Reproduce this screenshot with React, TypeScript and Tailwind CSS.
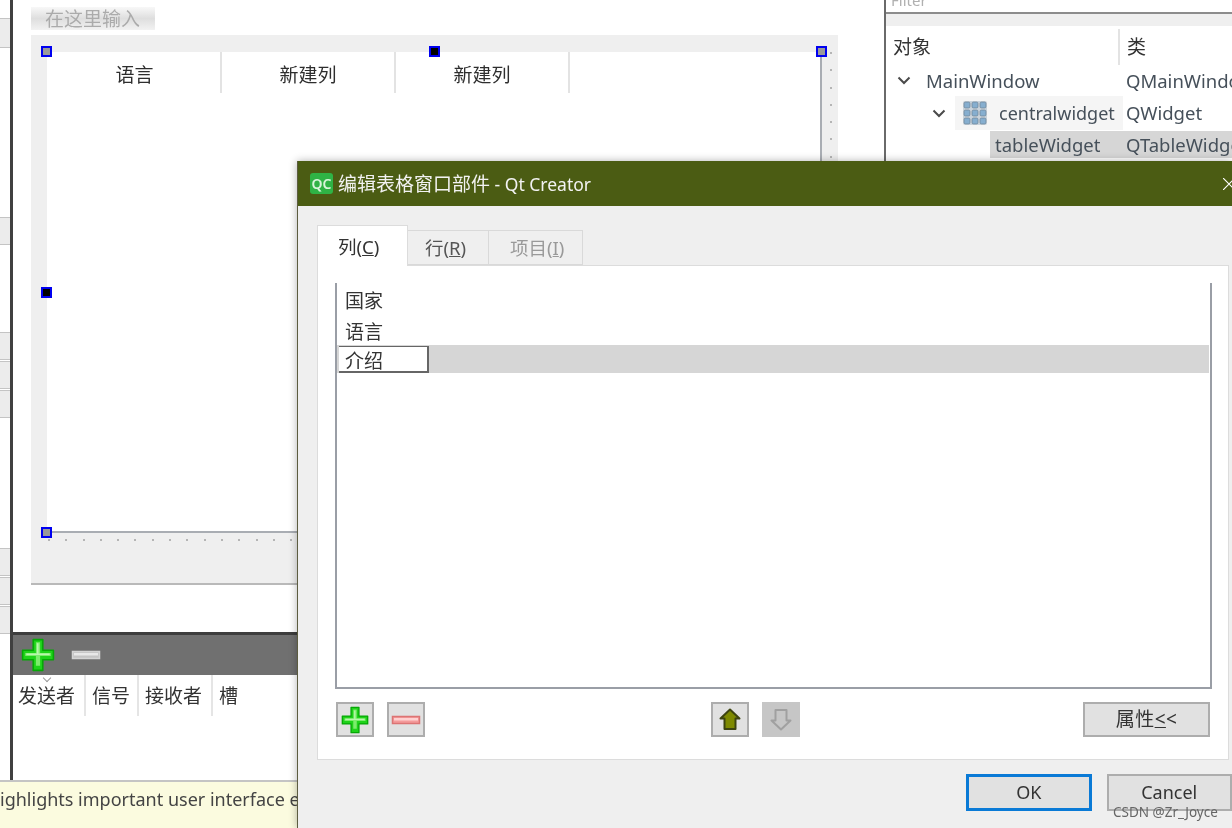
import type { ReactNode } from "react";

const FONT = "font-['Noto_Sans','Noto_Sans_CJK_SC',sans-serif]";

function Handle({ className, dark = false }: { className: string; dark?: boolean }) {
  return (
    <span
      className={`absolute h-[11px] w-[11px] border-2 border-[#0000f0] ${dark ? "bg-black" : "bg-[#9a9a9a]"} ${className}`}
    />
  );
}

function PlusIcon({ size = 34 }: { size?: number }) {
  return (
    <svg width={size} height={size} viewBox="0 0 32 32">
      <path
        d="M11.500 1.500h9v10h10v9h-10v10h-9v-10h-10v-9h10z"
        fill="#1fd31a"
        stroke="#06a806"
        strokeWidth="1.500"
        strokeLinejoin="round"
      />
      <path d="M14 4h4v10h10v3H18v9h-4v-9H4v-3h10z" fill="#7cec6c" />
      <path d="M5 14.500h22v1.500H5zM15 5h1.500v10H15z" fill="#b9f7ad" />
    </svg>
  );
}

function MinusIcon({ fill, stroke, shine }: { fill: string; stroke: string; shine: string }) {
  return (
    <svg width="30" height="10" viewBox="0 0 30 10">
      <rect x="1.500" y="1.500" width="27" height="7" fill={fill} stroke={stroke} strokeWidth="1.500" />
      <rect x="3" y="3" width="24" height="2.500" fill={shine} />
    </svg>
  );
}

function ArrowIcon({ down = false, fill, stroke }: { down?: boolean; fill: string; stroke: string }) {
  return (
    <svg width="22" height="23" viewBox="0 0 22 23" className={down ? "rotate-180" : ""}>
      <path
        d="M11 1.500 20.500 10.500H16.500V21H5.500V10.500H1.500z"
        fill={fill}
        stroke={stroke}
        strokeWidth="2"
        strokeLinejoin="round"
      />
    </svg>
  );
}

function Chevron() {
  return (
    <svg width="14" height="9" viewBox="0 0 14 9" className="shrink-0">
      <path d="M1.500 1.500 7 7l5.500-5.500" fill="none" stroke="#4a4a4a" strokeWidth="2" />
    </svg>
  );
}

function GridIcon() {
  return (
    <svg width="24" height="24" viewBox="0 0 24 24" className="shrink-0">
      <rect width="24" height="24" fill="#c9d3dc" rx="2" />
      {[1, 9, 17].map((y) =>
        [1, 9, 17].map((x) => (
          <rect key={`${x}-${y}`} x={x} y={y} width="6" height="6" rx="1.500" fill="#86aecf" stroke="#64788a" strokeWidth="0.600" />
        )),
      )}
    </svg>
  );
}

function CloseIcon() {
  // the X runs off the right edge of the window
  return (
    <svg width="9" height="12" viewBox="0 0 9 12">
      <path d="M0 0 12 12M12 0 0 12" fill="none" stroke="#fff" strokeWidth="1.200" />
    </svg>
  );
}

function QtLogo() {
  return (
    <span className="flex h-[21px] w-[23px] items-center justify-center rounded-[3px] bg-[#2fb345] text-[14px] leading-none font-semibold text-[#d8f5da]">
      QC
    </span>
  );
}

function ToolButton({ children, disabled = false, className = "" }: { children: ReactNode; disabled?: boolean; className?: string }) {
  return (
    <button
      type="button"
      className={`flex h-[35px] w-[38px] items-center justify-center border-2 ${disabled ? "border-[#c6c6c6] bg-[#c6c6c6]" : "border-[#adadad] bg-[#e1e1e1]"} ${className}`}
    >
      {children}
    </button>
  );
}

function SideStrip() {
  const groups = [
    { gap: "mt-[18px]", heights: ["h-[30px]"] },
    { gap: "mt-[169px]", heights: ["h-[28px]"] },
    { gap: "mt-[87px]", heights: ["h-[28px]", "h-[28px]", "h-[28px]"] },
    { gap: "mt-[130px]", heights: ["h-[28px]", "h-[28px]", "h-[28px]"] },
  ];
  return (
    <div className="flex w-[10px] shrink-0 flex-col bg-white">
      {groups.map((g, i) => (
        <div key={i} className={`flex flex-col gap-px ${g.gap}`}>
          {g.heights.map((h, j) => (
            <div key={j} className={`${h} border-y border-[#c4c4c4] bg-[#ececec]`} />
          ))}
        </div>
      ))}
    </div>
  );
}

function FormCanvas() {
  return (
    <div className="relative ml-[18px] mt-[5px] h-[550px] w-[807px] border-b-2 border-[#b9b9b9] bg-[#efefef] pl-[16px] pt-[17px]">
      <div className="flex h-[481px] w-[775px] flex-col border-r-2 border-b-2 border-[#a9adb3] bg-white">
        <div className="flex h-[41px] text-[19px] leading-[46px] text-[#2e2e2e]">
          {["语言", "新建列", "新建列"].map((label, i) => (
            <div key={i} className={`flex justify-center border-r-2 border-[#e3e3e3] ${i === 0 ? "w-[175px] pl-[2px]" : "w-[174px]"}`}>
              {label}
            </div>
          ))}
        </div>
      </div>
      <div className="absolute left-[17px] top-[504px] flex gap-[15.300px]">
        {Array.from({ length: 46 }).map((_, i) => (
          <span key={i} className="h-[2px] w-[2px] bg-[#b5b5b5]" />
        ))}
      </div>
      <div className="absolute left-[799px] top-[17px] flex flex-col gap-[15.300px]">
        {Array.from({ length: 28 }).map((_, i) => (
          <span key={i} className="h-[2px] w-[2px] bg-[#b5b5b5]" />
        ))}
      </div>
      <Handle className="left-[10px] top-[11px]" />
      <Handle dark className="left-[398px] top-[11px]" />
      <Handle className="left-[785px] top-[11px]" />
      <Handle dark className="left-[10px] top-[252px]" />
      <Handle className="left-[10px] top-[492px]" />
    </div>
  );
}

function CenterPane() {
  return (
    <div className="flex w-[874px] shrink-0 flex-col border-l-[3px] border-[#404040]">
      <div className="ml-[18px] mt-[7px] h-[23px] w-[124px] bg-gradient-to-b from-[#f8f8f8] via-[#dedede] to-[#f2f2f2] pl-[14px] text-[19px] leading-[24px] text-[#ababab]">
        在这里输入
      </div>
      <FormCanvas />
      <div className="h-[47px]" />
      <div className="h-[3px] bg-[#3d3d3d]" />
      <div className="flex h-[40px] items-center bg-[#707070] pl-[8px]">
        <PlusIcon />
        <span className="ml-[16px]">
          <MinusIcon fill="#c4c4c4" stroke="#d4d4d4" shine="#e8e8e8" />
        </span>
      </div>
      <div className="relative flex h-[41px] text-[19px] leading-[42px] text-[#333]">
        <div className="absolute left-[31px] top-0 h-[6px] w-[6px] -rotate-45 border-b border-l border-[#9a9a9a]" />
        {[
          { label: "发送者", w: "w-[73px]", pl: "pl-[5px]" },
          { label: "信号", w: "w-[53px]", pl: "pl-[6px]" },
          { label: "接收者", w: "w-[74px]", pl: "pl-[6px]" },
          { label: "槽", w: "w-[40px]", pl: "pl-[6px]" },
        ].map((c) => (
          <div key={c.label} className={`${c.w} ${c.pl} border-r-2 border-[#e5e5e5] last:border-r-0`}>
            {c.label}
          </div>
        ))}
      </div>
    </div>
  );
}

function InspectorPane() {
  return (
    <div className="flex min-w-0 flex-1 flex-col overflow-hidden border-l-2 border-[#6a6a6a] text-[18.500px] text-[#46505a]">
      <div className="h-[14px] border-b-2 border-[#8c8c8c] pl-[5px] text-[15px] leading-[0px] text-[#b0b0b0]">Filter</div>
      <div className="h-[12px] bg-[#efefef]" />
      <div className="flex h-[39px] items-center pt-[3px] text-[19px] text-[#333]">
        <div className="flex h-full w-[234px] items-center border-r-2 border-[#e3e3e3] pl-[7px]">对象</div>
        <div className="pl-[7px]">类</div>
      </div>
      <div className="flex h-[31px] items-center whitespace-nowrap">
        <div className="flex w-[240px] shrink-0 items-center pl-[11px]">
          <Chevron />
          <span className="pl-[15px]">MainWindow</span>
        </div>
        <span>QMainWindow</span>
      </div>
      <div className="flex h-[34px] items-center whitespace-nowrap">
        <div className="flex w-[240px] shrink-0 items-center pl-[46px]">
          <Chevron />
          <div className="ml-[9px] flex h-[34px] w-[168px] items-center gap-[12px] bg-[#f5f5f5] pl-[8px]">
            <GridIcon />
            <span className="text-[18px]">centralwidget</span>
          </div>
        </div>
        <span>QWidget</span>
      </div>
      <div className="ml-[104px] mt-px flex h-[27px] items-center whitespace-nowrap bg-[#d6d6d6]">
        <span className="w-[136px] shrink-0 pl-[5px]">tableWidget</span>
        <span>QTableWidget</span>
      </div>
    </div>
  );
}

function EditDialog() {
  return (
    <div className="absolute left-[297px] top-[161px] flex h-[667px] w-[935px] flex-col border-l border-[#5c5c40] bg-[#efefef] shadow-[0_0_8px_rgba(0,0,0,0.3)]">
      <div className="flex h-[45px] shrink-0 items-center justify-between bg-[#4b5c13] pl-[12px] text-white">
        <div className="flex items-center gap-[5px]">
          <QtLogo />
          <span className="pt-[2px] text-[19px] text-[#f2f2f2]">
            编辑表格窗口部件<span className="text-[17.500px]"> - Qt Creator</span>
          </span>
        </div>
        <CloseIcon />
      </div>

      <div className="ml-[19px] mt-[19px] flex h-[40px] text-[18.500px]">
        <div className="z-10 h-[41px] w-[91px] border border-b-0 border-[#dcdcdc] bg-white pl-[20px] leading-[42px] text-[#333]">
          列(<span className="underline">C</span>)
        </div>
        <div className="mt-[5px] h-[35px] w-[81px] border border-l-0 border-[#d9d9d9] bg-[#efefef] pl-[17px] leading-[33px] text-[#555]">
          行(<span className="underline">R</span>)
        </div>
        <div className="mt-[5px] h-[35px] w-[94px] border border-l-0 border-[#d9d9d9] bg-[#efefef] pl-[21px] leading-[33px] text-[#999]">
          项目(<span className="underline">I</span>)
        </div>
      </div>

      <div className="ml-[19px] flex h-[495px] w-[912px] flex-col border border-[#dcdcdc] bg-white pl-[17px] pt-[17px]">
        <div className="flex h-[406px] w-[877px] flex-col border-x-2 border-b-2 border-[#9a9ea6] pt-[3px] text-[19px] leading-[31px] text-[#333]">
          <div className="pl-[8px]">国家</div>
          <div className="pl-[8px]">语言</div>
          <div className="mr-px mt-[-3px] flex h-[28px] items-center bg-[#d6d6d6] pl-[2px] leading-none">
            <div className="h-[27px] w-[90px] border-r-2 border-b-2 border-t border-[#666] bg-white pl-[6px] leading-[29px]">介绍</div>
          </div>
        </div>
        <div className="ml-px mt-[13px] flex w-[874px] items-start">
          <ToolButton><PlusIcon size={28} /></ToolButton>
          <ToolButton className="ml-[13px]"><MinusIcon fill="#f49a9a" stroke="#dc7474" shine="#ffd0d0" /></ToolButton>
          <ToolButton className="ml-[286px]"><ArrowIcon fill="#7e8a00" stroke="#3d4410" /></ToolButton>
          <ToolButton disabled className="ml-[13px]"><ArrowIcon down fill="#c6c6c6" stroke="#a0a0a0" /></ToolButton>
          <button
            type="button"
            className="ml-auto h-[35px] w-[127px] border-2 border-[#adadad] bg-[#e1e1e1] text-[19px] tracking-[0.4px] text-[#333]"
          >
            属性<span className="underline">&lt;</span>&lt;
          </button>
        </div>
      </div>

      <div className="ml-[668px] mt-[14px] flex gap-[15px] text-[18px] text-[#333]">
        <button type="button" className="h-[37px] w-[126px] border-[3px] border-[#0a7ad6] bg-[#e1e1e1]">OK</button>
        <button type="button" className="h-[37px] w-[126px] border-2 border-[#adadad] bg-[#e1e1e1]">Cancel</button>
      </div>
    </div>
  );
}

export default function App() {
  return (
    <div className={`relative h-[828px] w-[1232px] overflow-hidden bg-white blur-[0.35px] ${FONT}`}>
      <div className="flex h-[780px]">
        <SideStrip />
        <CenterPane />
        <InspectorPane />
      </div>
      <div className="h-[48px] border-t-2 border-[#c4c4c4] bg-[#fbfbdf] text-[18px] leading-[35px] whitespace-nowrap text-[#444]">
        ighlights important user interface elements
      </div>

      <EditDialog />

      <div className="absolute left-[1113px] top-[802px] text-[13.500px] text-[#666]">CSDN @Zr_Joyce</div>
    </div>
  );
}
